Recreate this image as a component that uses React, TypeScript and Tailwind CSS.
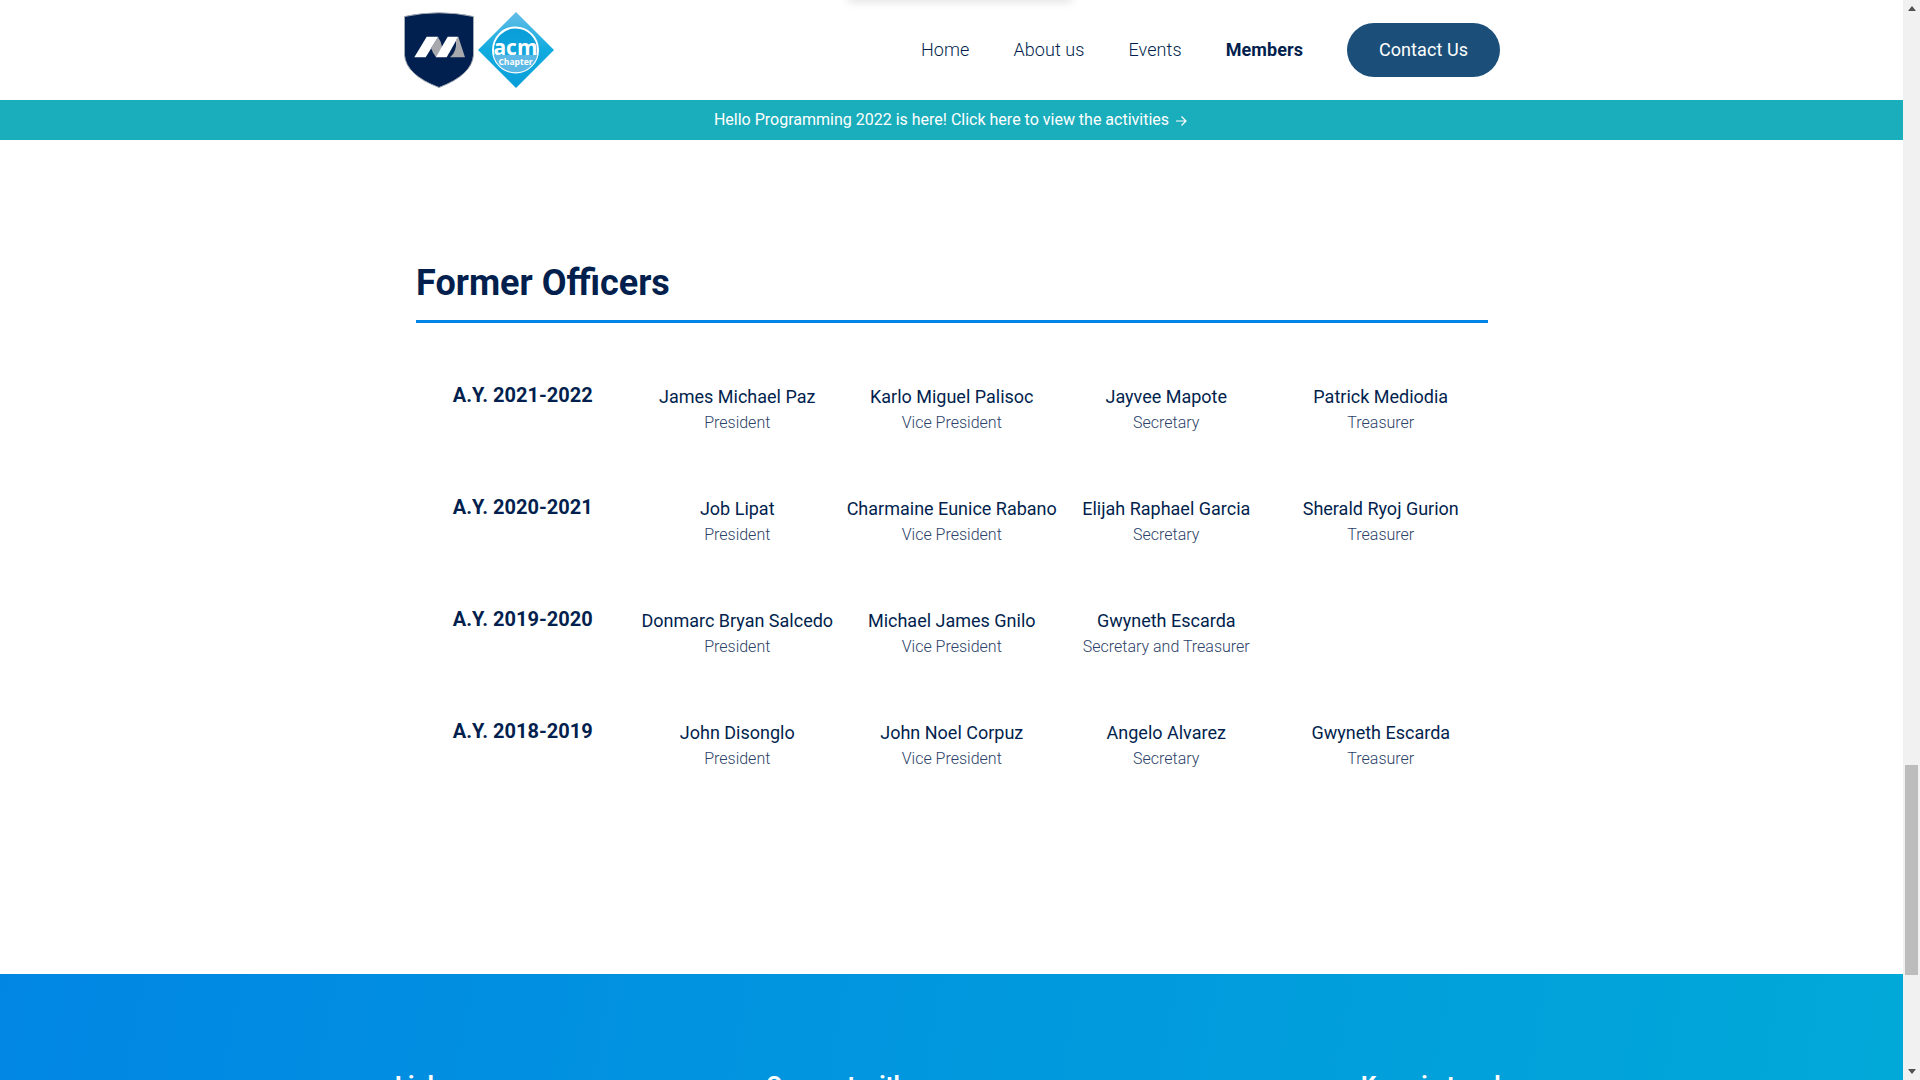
const rows = [
  { year: "A.Y. 2021-2022", people: [["James Michael Paz", "President"], ["Karlo Miguel Palisoc", "Vice President"], ["Jayvee Mapote", "Secretary"], ["Patrick Mediodia", "Treasurer"]] },
  { year: "A.Y. 2020-2021", people: [["Job Lipat", "President"], ["Charmaine Eunice Rabano", "Vice President"], ["Elijah Raphael Garcia", "Secretary"], ["Sherald Ryoj Gurion", "Treasurer"]] },
  { year: "A.Y. 2019-2020", people: [["Donmarc Bryan Salcedo", "President"], ["Michael James Gnilo", "Vice President"], ["Gwyneth Escarda", "Secretary and Treasurer"]] },
  { year: "A.Y. 2018-2019", people: [["John Disonglo", "President"], ["John Noel Corpuz", "Vice President"], ["Angelo Alvarez", "Secretary"], ["Gwyneth Escarda", "Treasurer"]] },
];

function Logo() {
  return (
    <svg width="150" height="76" viewBox="0 0 150 76" className="block">
      <defs>
        <linearGradient id="dia" x1="0" y1="0" x2="0" y2="1">
          <stop offset="0" stopColor="#66bde7" />
          <stop offset="0.5" stopColor="#10abdf" />
          <stop offset="1" stopColor="#0a9dd8" />
        </linearGradient>
        <linearGradient id="innerTop" x1="0" y1="0" x2="0" y2="1">
          <stop offset="0" stopColor="#0a9dd8" />
          <stop offset="1" stopColor="#12abdf" />
        </linearGradient>
      </defs>
      <path d="M0.5 4.5 Q35 -3 69.5 4.5 L69.5 43 Q68 63 35 75.5 Q2 63 0.5 43 Z" fill="#012050" stroke="#a3aab3" strokeWidth="1" />
      <path d="M10.3 45.3 L22.7 24.7 L34.3 24.7 L21.7 45.3 Z" fill="#ffffff" />
      <path d="M34 25 L27 36 Q29 42 32 45 L38 35 Q37 29 34 25 Z" fill="#a7a9ac" />
      <path d="M31.7 45.3 L43.7 24.7 L54.3 24.7 L42.7 45.3 Z" fill="#ffffff" />
      <path d="M54.3 24.7 Q58 36 61 45.3 L46 45.3 Q53 40 52 28 Z" fill="#a7a9ac" />
      <path d="M112 0 L150 38 L112 76 L74 38 Z" fill="url(#dia)" />
      <circle cx="111.5" cy="38" r="22.5" fill="url(#innerTop)" stroke="#ffffff" strokeWidth="2" />
      <path d="M89.6 43 L133.4 43 A22.5 22.5 0 0 1 89.6 43 Z" fill="#5cb9e5" />
      <text x="111.5" y="42.5" textAnchor="middle" fill="#ffffff" fontSize="21" fontWeight="700" fontFamily="'Open Sans', sans-serif">acm</text>
      <text x="111.5" y="52.5" textAnchor="middle" fill="#ffffff" fontSize="8.5" fontWeight="700" fontFamily="'Open Sans', sans-serif">Chapter</text>
    </svg>
  );
}

function Scrollbar() {
  return (
    <div className="w-[17px] h-full shrink-0 bg-[#f1f1f1] relative">
      <svg width="8" height="5" viewBox="0 0 8 5" className="absolute top-[6px] left-[4.5px]"><path d="M4 0 L8 5 L0 5 Z" fill="#505050" /></svg>
      <div className="absolute top-[765px] left-[2px] w-[13px] h-[210px] bg-[#bcbcbc]" />
      <svg width="8" height="5" viewBox="0 0 8 5" className="absolute bottom-[6px] left-[4.5px]"><path d="M0 0 L8 0 L4 5 Z" fill="#505050" /></svg>
    </div>
  );
}

export default function App() {
  return (
    <div className="w-[1920px] h-[1080px] overflow-hidden flex bg-white font-['Roboto',sans-serif] text-[#021f4e]">
      <div className="flex-1 min-w-0 flex flex-col relative">
        <div className="absolute top-[-10px] left-[848px] w-[224px] h-[10px] shadow-[0_2px_10px_rgba(0,0,0,0.12)]" />
        <header className="h-[100px] w-[1096px] ml-[404px] flex items-center justify-between shrink-0">
          <Logo />
          <nav className="flex items-center gap-[44px] text-[18px] font-light tracking-[0.08px]">
            <span className="mb-[2px]">Home</span>
            <span className="mb-[2px]">About us</span>
            <span className="mb-[2px]">Events</span>
            <span className="mb-[2px] font-bold">Members</span>
            <span className="h-[54px] w-[153px] pb-[2px] rounded-full bg-[#1b4f79] text-white font-normal flex items-center justify-center">Contact Us</span>
          </nav>
        </header>
        <div className="h-[40px] shrink-0 pr-[2px] bg-[#1aadbb] text-white text-[16px] flex items-center justify-center gap-[6px]">
          <span>Hello Programming 2022 is here! Click here to view the activities</span>
          <svg width="12" height="12" viewBox="0 0 12 12" fill="none" stroke="#ffffff" strokeWidth="1.2" className="mt-[1px]"><path d="M1 6 H11 M6.5 1.5 L11 6 L6.5 10.5" /></svg>
        </div>
        <main className="h-[834px] shrink-0 w-[1072px] ml-[416px] pt-[122px]">
          <h2 className="text-[36px] leading-[42px] font-bold pb-[16px] border-b-[3px] border-[#0284e8]">Former Officers</h2>
          <div className="pt-[60px] -ml-[0.5px] flex flex-col gap-[52px]">
            {rows.map((row) => (
              <div key={row.year} className="grid grid-cols-5 h-[60px]">
                <div className="text-center text-[20px] leading-[24px] font-bold">{row.year}</div>
                {row.people.map(([name, role]) => (
                  <div key={name + role} className="text-center whitespace-nowrap">
                    <div className="text-[18px] leading-[26px] pt-[1px]">{name}</div>
                    <div className="text-[16px] leading-[24px] font-light text-[#2c4268] mt-[1px]">{role}</div>
                  </div>
                ))}
              </div>
            ))}
          </div>
        </main>
        <footer className="flex-1 bg-[linear-gradient(100deg,#0186e4,#01a9d8)] text-white font-bold text-[24px] leading-[28px] pt-[97px]">
          <div className="relative h-[28px]">
            <span className="absolute left-[395px]">Links</span>
            <span className="absolute left-[766px]">Connect with us</span>
            <span className="absolute left-[1361px]">Keep in touch</span>
          </div>
        </footer>
      </div>
      <Scrollbar />
    </div>
  );
}
